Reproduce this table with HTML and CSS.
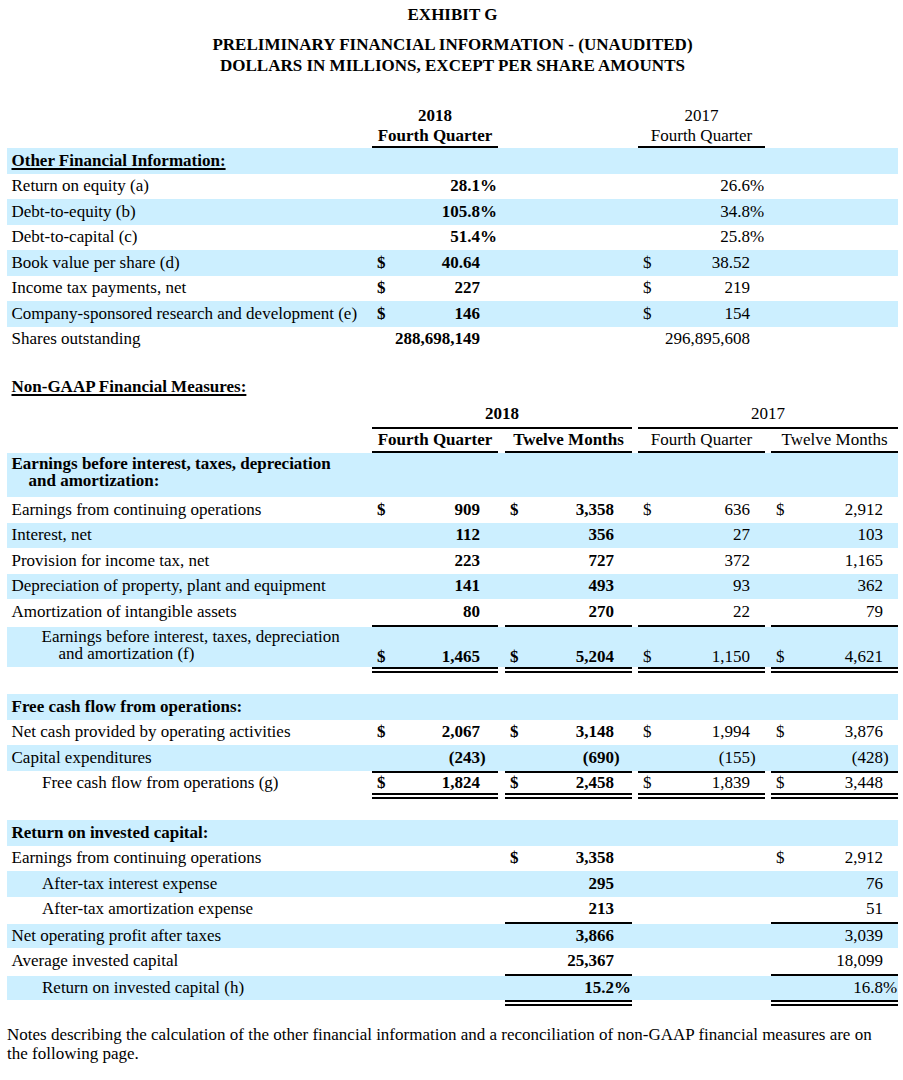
FILE: index.html
```html
<!DOCTYPE html>
<html>
<head>
<meta charset="utf-8">
<title>Exhibit G</title>
<link rel="stylesheet" href="styles.css">
</head>
<body>
<h1 class="title">EXHIBIT G</h1>
<h2 class="subtitle">PRELIMINARY FINANCIAL INFORMATION - (UNAUDITED)<br>DOLLARS IN MILLIONS, EXCEPT PER SHARE AMOUNTS</h2>

<table class="fin">
<colgroup>
<col class="w-l">
<col class="w-c"><col class="w-v1"><col class="w-s1"><col class="w-g1">
<col class="w-c"><col class="w-v2"><col class="w-s1"><col class="w-g2">
<col class="w-c"><col class="w-v3"><col class="w-s2"><col class="w-g2">
<col class="w-c"><col class="w-v3"><col class="w-s2">
</colgroup>
<tbody>
<tr class="hd-a"><td class="l"></td><td colspan="3" class="hc x">2018</td><td></td><td colspan="3"></td><td></td><td colspan="3" class="hc">2017</td><td></td><td colspan="3"></td></tr>
<tr class="hd-b"><td class="l"></td><td colspan="3" class="hc x ul">Fourth Quarter</td><td></td><td colspan="3"></td><td></td><td colspan="3" class="hc ul">Fourth Quarter</td><td></td><td colspan="3"></td></tr>

<tr class="b"><td class="l"><b class="u">Other Financial Information:</b></td><td colspan="15"></td></tr>
<tr><td class="l">Return on equity (a)</td><td class="c x"></td><td class="v x">28.1</td><td class="s x">%</td><td></td><td colspan="3"></td><td></td><td class="c"></td><td class="v">26.6</td><td class="s">%</td><td></td><td colspan="3"></td></tr>
<tr class="b"><td class="l">Debt-to-equity (b)</td><td class="c x"></td><td class="v x">105.8</td><td class="s x">%</td><td></td><td colspan="3"></td><td></td><td class="c"></td><td class="v">34.8</td><td class="s">%</td><td></td><td colspan="3"></td></tr>
<tr><td class="l">Debt-to-capital (c)</td><td class="c x"></td><td class="v x">51.4</td><td class="s x">%</td><td></td><td colspan="3"></td><td></td><td class="c"></td><td class="v">25.8</td><td class="s">%</td><td></td><td colspan="3"></td></tr>
<tr class="b"><td class="l">Book value per share (d)</td><td class="c x">$</td><td class="v x">40.64</td><td class="s"></td><td></td><td colspan="3"></td><td></td><td class="c">$</td><td class="v">38.52</td><td class="s"></td><td></td><td colspan="3"></td></tr>
<tr><td class="l">Income tax payments, net</td><td class="c x">$</td><td class="v x">227</td><td class="s"></td><td></td><td colspan="3"></td><td></td><td class="c">$</td><td class="v">219</td><td class="s"></td><td></td><td colspan="3"></td></tr>
<tr class="b"><td class="l">Company-sponsored research and development (e)</td><td class="c x">$</td><td class="v x">146</td><td class="s"></td><td></td><td colspan="3"></td><td></td><td class="c">$</td><td class="v">154</td><td class="s"></td><td></td><td colspan="3"></td></tr>
<tr><td class="l">Shares outstanding</td><td class="c x"></td><td class="v x">288,698,149</td><td class="s"></td><td></td><td colspan="3"></td><td></td><td class="c"></td><td class="v">296,895,608</td><td class="s"></td><td></td><td colspan="3"></td></tr>

<tr class="sp1"><td colspan="16"></td></tr>
<tr><td class="l"><b class="u">Non-GAAP Financial Measures:</b></td><td colspan="15"></td></tr>

<tr class="hd-c"><td class="l"></td><td colspan="7" class="hc x ul">2018</td><td></td><td colspan="7" class="hc ul">2017</td></tr>
<tr class="hd-d"><td class="l"></td><td colspan="3" class="hc x ul">Fourth Quarter</td><td></td><td colspan="3" class="hc x ul">Twelve Months</td><td></td><td colspan="3" class="hc ul">Fourth Quarter</td><td></td><td colspan="3" class="hc ul">Twelve Months</td></tr>

<tr class="b tall"><td class="l hang0"><b>Earnings before interest, taxes, depreciation<br>and amortization:</b></td><td colspan="15"></td></tr>
<tr><td class="l">Earnings from continuing operations</td>
<td class="c x">$</td><td class="v x">909</td><td class="s"></td><td></td>
<td class="c x">$</td><td class="v x">3,358</td><td class="s"></td><td></td>
<td class="c">$</td><td class="v">636</td><td class="s"></td><td></td>
<td class="c">$</td><td class="v">2,912</td><td class="s"></td></tr>
<tr class="b"><td class="l">Interest, net</td>
<td class="c"></td><td class="v x">112</td><td class="s"></td><td></td>
<td class="c"></td><td class="v x">356</td><td class="s"></td><td></td>
<td class="c"></td><td class="v">27</td><td class="s"></td><td></td>
<td class="c"></td><td class="v">103</td><td class="s"></td></tr>
<tr><td class="l">Provision for income tax, net</td>
<td class="c"></td><td class="v x">223</td><td class="s"></td><td></td>
<td class="c"></td><td class="v x">727</td><td class="s"></td><td></td>
<td class="c"></td><td class="v">372</td><td class="s"></td><td></td>
<td class="c"></td><td class="v">1,165</td><td class="s"></td></tr>
<tr class="b"><td class="l">Depreciation of property, plant and equipment</td>
<td class="c"></td><td class="v x">141</td><td class="s"></td><td></td>
<td class="c"></td><td class="v x">493</td><td class="s"></td><td></td>
<td class="c"></td><td class="v">93</td><td class="s"></td><td></td>
<td class="c"></td><td class="v">362</td><td class="s"></td></tr>
<tr><td class="l">Amortization of intangible assets</td>
<td class="c"></td><td class="v x">80</td><td class="s"></td><td></td>
<td class="c"></td><td class="v x">270</td><td class="s"></td><td></td>
<td class="c"></td><td class="v">22</td><td class="s"></td><td></td>
<td class="c"></td><td class="v">79</td><td class="s"></td></tr>
<tr class="b tot ebitda"><td class="l hang1">Earnings before interest, taxes, depreciation<br>and amortization (f)</td>
<td class="c x k">$</td><td class="v x k">1,465</td><td class="s k"></td><td></td>
<td class="c x k">$</td><td class="v x k">5,204</td><td class="s k"></td><td></td>
<td class="c k">$</td><td class="v k">1,150</td><td class="s k"></td><td></td>
<td class="c k">$</td><td class="v k">4,621</td><td class="s k"></td></tr>

<tr class="sp2"><td colspan="16"></td></tr>
<tr class="b"><td class="l"><b>Free cash flow from operations:</b></td><td colspan="15"></td></tr>
<tr><td class="l">Net cash provided by operating activities</td>
<td class="c x">$</td><td class="v x">2,067</td><td class="s"></td><td></td>
<td class="c x">$</td><td class="v x">3,148</td><td class="s"></td><td></td>
<td class="c">$</td><td class="v">1,994</td><td class="s"></td><td></td>
<td class="c">$</td><td class="v">3,876</td><td class="s"></td></tr>
<tr class="b"><td class="l">Capital expenditures</td>
<td class="c"></td><td class="v x">(243</td><td class="s x">)</td><td></td>
<td class="c"></td><td class="v x">(690</td><td class="s x">)</td><td></td>
<td class="c"></td><td class="v">(155</td><td class="s">)</td><td></td>
<td class="c"></td><td class="v">(428</td><td class="s">)</td></tr>
<tr class="tot fcf"><td class="l ind">Free cash flow from operations (g)</td>
<td class="c x k">$</td><td class="v x k">1,824</td><td class="s k"></td><td></td>
<td class="c x k">$</td><td class="v x k">2,458</td><td class="s k"></td><td></td>
<td class="c k">$</td><td class="v k">1,839</td><td class="s k"></td><td></td>
<td class="c k">$</td><td class="v k">3,448</td><td class="s k"></td></tr>

<tr class="sp3"><td colspan="16"></td></tr>
<tr class="b"><td class="l"><b>Return on invested capital:</b></td><td colspan="15"></td></tr>
<tr><td class="l">Earnings from continuing operations</td>
<td colspan="3"></td><td></td>
<td class="c x">$</td><td class="v x">3,358</td><td class="s"></td><td></td>
<td colspan="3"></td><td></td>
<td class="c">$</td><td class="v">2,912</td><td class="s"></td></tr>
<tr class="b"><td class="l ind">After-tax interest expense</td>
<td colspan="3"></td><td></td>
<td class="c"></td><td class="v x">295</td><td class="s"></td><td></td>
<td colspan="3"></td><td></td>
<td class="c"></td><td class="v">76</td><td class="s"></td></tr>
<tr><td class="l ind">After-tax amortization expense</td>
<td colspan="3"></td><td></td>
<td class="c"></td><td class="v x">213</td><td class="s"></td><td></td>
<td colspan="3"></td><td></td>
<td class="c"></td><td class="v">51</td><td class="s"></td></tr>
<tr class="b top nopat"><td class="l">Net operating profit after taxes</td>
<td colspan="3"></td><td></td>
<td class="c k"></td><td class="v x k">3,866</td><td class="s k"></td><td></td>
<td colspan="3"></td><td></td>
<td class="c k"></td><td class="v k">3,039</td><td class="s k"></td></tr>
<tr><td class="l">Average invested capital</td>
<td colspan="3"></td><td></td>
<td class="c"></td><td class="v x">25,367</td><td class="s"></td><td></td>
<td colspan="3"></td><td></td>
<td class="c"></td><td class="v">18,099</td><td class="s"></td></tr>
<tr class="b tot roic"><td class="l ind">Return on invested capital (h)</td>
<td colspan="3"></td><td></td>
<td class="c k"></td><td class="v x k">15.2</td><td class="s x k">%</td><td></td>
<td colspan="3"></td><td></td>
<td class="c k"></td><td class="v k">16.8</td><td class="s k">%</td></tr>
</tbody>
</table>

<p class="notes">Notes describing the calculation of the other financial information and a reconciliation of non-GAAP financial measures are on the following page.</p>
</body>
</html>
```
FILE: styles.css
```css
* { box-sizing: border-box; }

body {
  margin: 0;
  padding: 0 5px 0 7px;
  font-family: "Liberation Serif", "Times New Roman", serif;
  font-size: 17px;
  color: #000;
  background: #fff;
}

.title {
  margin: 5px 0 0;
  font-size: 17px;
  line-height: 20px;
  font-weight: bold;
  text-align: center;
}

.subtitle {
  margin: 8.5px 0 0;
  font-size: 17px;
  line-height: 21px;
  font-weight: bold;
  text-align: center;
}

.fin {
  margin-top: 30.5px;
  width: 891px;
  table-layout: fixed;
  border-collapse: separate;
  border-spacing: 0;
}

.w-l { width: 365px; }
.w-c { width: 20px; }
.w-v1 { width: 88px; }
.w-v2 { width: 89px; }
.w-v3 { width: 92px; }
.w-s1 { width: 18px; }
.w-s2 { width: 15px; }
.w-g1 { width: 7px; }
.w-g2 { width: 6px; }

.fin tr { height: 25.5px; }

.fin td {
  padding: 0;
  line-height: 20px;
  white-space: nowrap;
  vertical-align: middle;
  background-clip: padding-box;
}

.fin tr.b > td { background-color: #ccefff; }

.fin td.l { padding-left: 4.5px; }
.fin td.c { padding-left: 5px; text-align: left; }
.fin td.v { text-align: right; }
.fin td.s { text-align: left; }
.fin td.hc { text-align: center; }
.fin .x { font-weight: bold; }
.u { text-decoration: underline; text-decoration-thickness: 1.5px; text-underline-offset: 2px; }

.fin td.ul { border-bottom: 2px solid #000; }

.fin tr.hd-a { height: 20px; }
.fin tr.hd-b { height: 22px; }
.fin tr.hd-c { height: 29px; }
.fin tr.hd-d { height: 24px; }

.fin tr.sp1 { height: 22.5px; }
.fin tr.sp2 { height: 21px; }
.fin tr.sp3 { height: 21.5px; }

.fin tr.tall { height: 44px; }
.fin td.hang0 {
  vertical-align: top;
  padding-top: 1.5px;
  padding-left: 21.5px;
  text-indent: -17px;
  line-height: 17px;
}

.fin td.ind { padding-left: 35px; }

.fin tr.tot > td {
  border-top: 2px solid transparent;
  border-bottom: 6px double transparent;
}
.fin tr.top > td { border-top: 2px solid transparent; }
.fin tr.tot > td.k,
.fin tr.top > td.k { border-top-color: #000; border-bottom-color: #000; }

.fin tr.ebitda { height: 48.5px; }
.fin tr.ebitda > td { vertical-align: bottom; }
.fin td.hang1 {
  vertical-align: top !important;
  padding-top: 1px;
  padding-left: 51.5px;
  text-indent: -17px;
  line-height: 17px;
}

.fin tr.fcf { height: 28px; }
.fin tr.nopat { height: 26px; }
.fin tr.roic { height: 32px; }

.notes {
  margin: 19px 0 0;
  width: 884px;
  font-size: 17px;
  line-height: 19px;
}
```
